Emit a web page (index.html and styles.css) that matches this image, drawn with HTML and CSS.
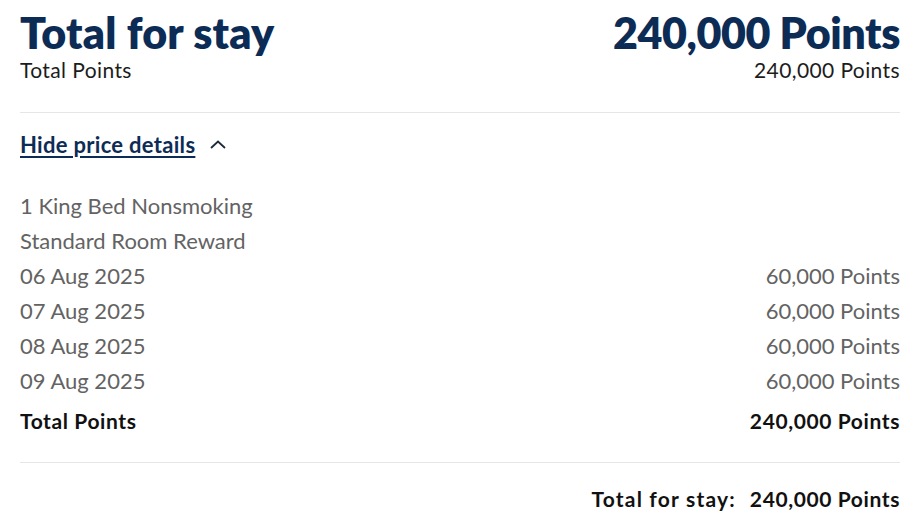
FILE: index.html
```html
<!DOCTYPE html>
<html>
<head>
<meta charset="utf-8">
<link rel="stylesheet" href="styles.css">
</head>
<body>
<div class="summary">
  <div class="header">
    <div class="left">
      <h1 class="title">Total for stay</h1>
      <div class="sub">Total Points</div>
    </div>
    <div class="right">
      <div class="title">240,000 Points</div>
      <div class="sub">240,000 Points</div>
    </div>
  </div>
  <div class="toggle">
    <a class="toggle-link" href="#">Hide price details</a>
    <svg class="chev" width="18" height="12" viewBox="0 0 18 12"><path d="M2 9 L9 2.5 L16 9" fill="none" stroke="#1c2a3a" stroke-width="1.8"/></svg>
  </div>
  <div class="details">
    <div class="row"><span>1 King Bed Nonsmoking</span></div>
    <div class="row"><span>Standard Room Reward</span></div>
    <div class="row"><span>06 Aug 2025</span><span>60,000 Points</span></div>
    <div class="row"><span>07 Aug 2025</span><span>60,000 Points</span></div>
    <div class="row"><span>08 Aug 2025</span><span>60,000 Points</span></div>
    <div class="row"><span>09 Aug 2025</span><span>60,000 Points</span></div>
    <div class="row total"><span>Total Points</span><span>240,000 Points</span></div>
  </div>
  <div class="footer">
    <span class="label">Total for stay:</span><span>240,000 Points</span>
  </div>
</div>
</body>
</html>
```
FILE: styles.css
```css
html, body { margin: 0; padding: 0; background: #fff; }
body { font-family: Lato, "Noto Sans", sans-serif; color: #1c1c1c; }
.summary { width: 880px; margin-left: 20px; }
.header { display: flex; justify-content: space-between; padding-top: 10px; padding-bottom: 28px; border-bottom: 1px solid #e6e6e6; }
.right { text-align: right; }
.title { margin: 0; font-size: 43px; font-weight: 800; color: #0c2c55; line-height: 46px; }
.right .title { letter-spacing: -0.4px; }
.left .title { letter-spacing: 0.2px; }
.sub { font-size: 21px; line-height: 28px; color: #1c1c1c; letter-spacing: 0.4px; }
.toggle { display: flex; align-items: center; gap: 14px; padding-top: 18px; height: 26px; }
.toggle-link { font-size: 22px; font-weight: 700; color: #0c2c55; text-decoration: underline; text-underline-offset: 3px; text-decoration-thickness: 2px; letter-spacing: 0.3px; }
.chev { margin-top: 2px; }
.details { padding-top: 31px; padding-bottom: 24px; border-bottom: 1px solid #e6e6e6; }
.row { display: flex; justify-content: space-between; font-size: 22px; line-height: 35px; color: #636363; }
.row.total { color: #111; font-weight: 700; margin-top: 5px; font-size: 21px; letter-spacing: 0.6px; }
.footer { display: flex; justify-content: flex-end; gap: 14px; padding-top: 23px; font-size: 21px; font-weight: 700; color: #111; letter-spacing: 0.6px; }
.footer .label { letter-spacing: 1.2px; }
```
